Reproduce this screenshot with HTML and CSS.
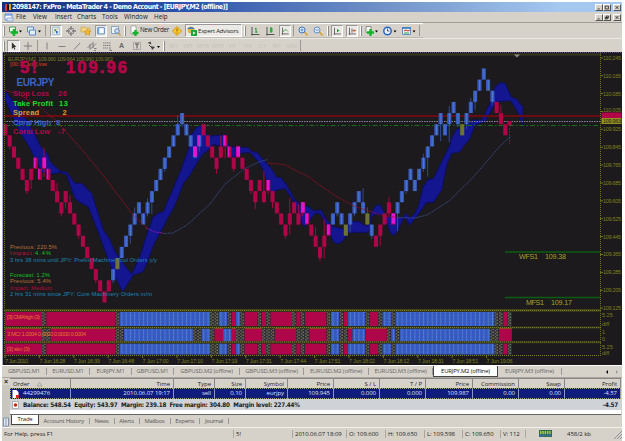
FILE: index.html
```html
<!DOCTYPE html>
<html lang="en">
<head>
<meta charset="utf-8">
<title>MetaTrader 4</title>
<link rel="stylesheet" href="styles.css">
</head>
<body>
<div class="app">
  <header class="title">
    <svg class="logo" viewBox="0 0 8 9"><path d="M1 1h2v7H1z" fill="#d33b20"/><path d="M3 2h2v5H3z" fill="#111"/><path d="M5 1h2v6H5z" fill="#e3a21c"/></svg>
    <span class="title-text">2098147: FxPro - MetaTrader 4 - Demo Account - [EURJPY,M2 (offline)]</span>
    <span class="wins"><svg class="win" viewBox="0 0 8 7"><path d="M2 5.5h3" class="k"/></svg><svg class="win" viewBox="0 0 8 7"><path d="M1.5 1.5h4.5v4h-4.5z" class="k"/></svg><svg class="win gap" viewBox="0 0 8 7"><path d="M2 1.5l4 4M6 1.5l-4 4" class="k"/></svg></span>
  </header>
  <nav class="menu">
    <svg class="mi" viewBox="0 0 10 9"><path d="M1 1h7v6H1z" fill="#fff" stroke="#6d93d6"/><path d="M1 2h7" stroke="#4a7ad0"/><path d="M3 5h6v3H3z" fill="#dce8fa" stroke="#6d93d6" stroke-width=".7"/></svg>
    <span>File</span><span>View</span><span>Insert</span><span>Charts</span><span>Tools</span><span>Window</span><span>Help</span>
    <span class="wins"><svg class="win" viewBox="0 0 8 7"><path d="M2 5.5h3" class="k"/></svg><svg class="win" viewBox="0 0 8 7"><path d="M3 1.5h3v2.5h-3zM1.5 3.5h3v2h-3z" class="k"/></svg><svg class="win gap" viewBox="0 0 8 7"><path d="M2 1.5l4 4M6 1.5l-4 4" class="k"/></svg></span>
  </nav>
  <div class="bar bar1">
    <i class="grip"></i>
    <svg viewBox="0 0 15 12"><path d="M1.5 2h6v5h-6z" fill="#f4f8f4" stroke="#3f9a50"/><path d="M6 4v7M3 7.500h7" stroke="#14b428" stroke-width="2.600"/><path d="M11 5.500h3l-1.500 2z"/></svg>
    <svg viewBox="0 0 15 12"><path d="M1.500 2h6v5h-6z" fill="#e4eefc" stroke="#5c88d0"/><path d="M3.500 5h6v5h-6z" fill="#e4eefc" stroke="#5c88d0"/><path d="M12 5.500h3l-1.500 2z"/></svg>
    <i class="sep"></i>
    <svg class="on" viewBox="0 0 12 12"><path d="M2 1.500h8v9H2z" fill="#e9f2ee" stroke="#8fb1cf"/><path d="M4 4h2v2H4z" fill="#1e9a38"/><path d="M6 6h2v3H6z" fill="#2d67c8"/><path d="M4 8l4-5" stroke="#c9a340"/></svg>
    <svg viewBox="0 0 12 12"><circle cx="6" cy="6" r="3" fill="none" stroke="#7d7d80"/><path d="M6 1v4M6 7v4M1 6h4M7 6h4" stroke="#7d7d80" stroke-width="1.300"/></svg>
    <svg viewBox="0 0 12 12"><path d="M1 2h4l1 1h4v4H1z" fill="#f0d284" stroke="#c29a3a" stroke-width=".6"/><path d="M7.500 4l1.200 2 2.300.3-1.700 1.500.5 2.400-2.300-1.200-2.100 1.200.4-2.400L4 6.300 6.400 6z" fill="#f6b82e" stroke="#bf8420" stroke-width=".5"/></svg>
    <svg class="on" viewBox="0 0 12 12"><path d="M2 2h8v7.500H2z" fill="#fff" stroke="#3a74b8"/><path d="M3 2v7" stroke="#7aa9dc" stroke-width="2"/></svg>
    <svg viewBox="0 0 12 12"><path d="M1.500 1.500h7v7h-7z" fill="#eef3fa" stroke="#89a4c4"/><circle cx="7" cy="6" r="2.300" fill="#cfe0f5" stroke="#6288b6"/><path d="M8.500 8l2 2.500" stroke="#d0a030" stroke-width="1.500"/></svg>
    <i class="grip"></i>
    <svg viewBox="0 0 12 12"><path d="M3 1h5v8H3z" fill="#fff" stroke="#999" stroke-width=".8"/><path d="M7.500 5v6M4.500 8h6" stroke="#14b428" stroke-width="2.400"/></svg>
    <span class="lbl">New Order</span>
    <svg viewBox="0 0 12 12"><path d="M6 1.500L10.500 6 6 10.500 1.500 6z" fill="#ffc928" stroke="#bd8a12" stroke-width=".8"/><path d="M6 3.500v3M6 7.500v1" stroke="#8b5b00"/></svg>
    <span class="on expert"><svg viewBox="0 0 12 12"><circle cx="5" cy="5" r="3.500" fill="#e2b843"/><path d="M1 4q4-4 8 0z" fill="#3d78c2"/><path d="M5 5h6v6H5z" fill="#18a838"/><path d="M7 6.500v3l2.500-1.500z" fill="#fff"/></svg>Expert Advisors</span>
    <i class="grip"></i>
    <svg viewBox="0 0 12 12"><path d="M3 2v8.500M2 9.500h8.500" stroke="#555"/><path d="M7 3v5M6 3.500h1M7 7h1.500" stroke="#18972e"/></svg>
    <svg viewBox="0 0 12 12"><path d="M3 2v8.500M2 9.500h8.500" stroke="#555"/><path d="M7 2v6" stroke="#18972e"/><path d="M6 3h2.500v4H6z" fill="#28b040"/></svg>
    <svg class="on" viewBox="0 0 12 12"><path d="M3 2v8.500M2 9.500h8.500" stroke="#555"/><path d="M4 7q2-5 5.500-.5" fill="none" stroke="#3a9b48"/></svg>
    <i class="sep"></i>
    <svg viewBox="0 0 12 12"><path d="M7.500 7l3 3.500" stroke="#d9a32c" stroke-width="1.600"/><circle cx="5" cy="5" r="3" fill="#dceafc" stroke="#3f76c9"/><path d="M3.500 5h3M5 3.500v3" stroke="#3f76c9" stroke-width=".8"/></svg>
    <svg viewBox="0 0 12 12"><path d="M7.500 7l3 3.500" stroke="#d9a32c" stroke-width="1.600"/><circle cx="5" cy="5" r="3" fill="#dceafc" stroke="#5f8fd4"/><path d="M3.500 5h3" stroke="#3f76c9" stroke-width=".8"/></svg>
    <i class="grip"></i>
    <svg class="on" viewBox="0 0 12 12"><path d="M3 2v8.500M2 9.500h8.500" stroke="#555"/><path d="M6 3.500v4l3-2z" fill="#18972e"/></svg>
    <svg class="on" viewBox="0 0 12 12"><path d="M3 2v8.500M2 9.500h8.500M6 3v5" stroke="#555"/><path d="M7 5.500h4M8.500 4v3" stroke="#c8501c"/></svg>
    <i class="grip"></i>
    <svg viewBox="0 0 15 12"><path d="M2 1.500h5v6H2z" fill="#f4f8f4" stroke="#777" stroke-width=".8"/><path d="M6.500 4v7M3 7.500h7" stroke="#14b428" stroke-width="2.400"/><path d="M11 5.500h3l-1.500 2z"/></svg>
    <svg viewBox="0 0 15 12"><circle cx="5.500" cy="6" r="3.700" fill="#eaf3ff" stroke="#2766c4" stroke-width="1.500"/><path d="M5.500 3.500V6h2" fill="none" stroke="#333" stroke-width=".8"/><path d="M11.500 5.500h3l-1.500 2z"/></svg>
    <svg viewBox="0 0 15 12"><path d="M1.500 2.500h8v7h-8z" fill="#eef6fb" stroke="#5b92c8"/><path d="M1 3h9" stroke="#3b7cc4" stroke-width="1.600"/><path d="M3 6l2-1 2 1 2-1" fill="none" stroke="#c23"/><path d="M3 8h5" stroke="#2a9b40"/><path d="M11.500 5.500h3l-1.500 2z"/></svg>
    <i class="sep"></i>
  </div>
  <div class="bar bar2">
    <i class="grip"></i>
    <svg class="on" viewBox="0 0 12 12"><path d="M4 1.500v8l2-1.800 1.300 2.700 1-.5L7.100 7.300h2.300z" fill="#333"/></svg>
    <svg viewBox="0 0 12 12"><path d="M6 2v8M2 6h8" class="g"/></svg>
    <i class="sep"></i>
    <svg viewBox="0 0 12 12"><path d="M6 2.500v7" class="g"/></svg>
    <svg viewBox="0 0 12 12"><path d="M2.500 6.500h7" class="g"/></svg>
    <svg viewBox="0 0 12 12"><path d="M3 9.500l6-6.500" class="g"/></svg>
    <svg viewBox="0 0 12 12"><path d="M1.500 8l6-6M4 9.500l6-6M4 4v5M7 3v5" class="g"/><path d="M8 8.500h2.500M8 10.500h2" class="g"/></svg>
    <svg viewBox="0 0 12 12"><path d="M2 3h8M2 5.500h8M2 8h5" class="g" stroke-dasharray="1.500 .5"/><path d="M9 7v3.500h2" class="g"/></svg>
    <span class="let">A</span>
    <svg viewBox="0 0 12 12"><path d="M2.500 2.500h7v7h-7z" class="g" stroke-dasharray="1 1"/><path d="M4 4h4M6 4v4.500" stroke="#555"/></svg>
    <svg viewBox="0 0 15 12"><path d="M1.500 3l3-1.500 1 3zM5 6l4 1-3 3z" fill="#444"/><path d="M3 5l3 3" stroke="#444"/><path d="M11 6h3l-1.500 2z"/></svg>
    <i class="grip"></i>
    <span class="tf">M1</span><span class="tf">M5</span><span class="tf">M15</span><span class="tf">M30</span><span class="tf">H1</span><span class="tf">H4</span><span class="tf">D1</span><span class="tf">W1</span><span class="tf">MN</span>
    <i class="sep"></i>
  </div>

  <svg class="chart" id="chart" viewBox="2 52 620 313">
    <defs>
      <pattern id="up" width="4.310" height="3" patternUnits="userSpaceOnUse" x="3.300"><rect width="4.310" height="3" fill="#3559c2"/><rect x="1.700" width="1" height="1.300" fill="#3f8ae6"/><rect x="1.700" y="1.500" width="1" height="1" fill="#8080a8"/></pattern>
      <pattern id="flat" width="4.310" height="3" patternUnits="userSpaceOnUse" x="3.300"><rect width="4.310" height="3" fill="#2b2b2e"/><path d="M.8 0v1.500M2.800 1.500V3" stroke="#85858c" stroke-width="1"/><path d="M1.800 1.500V3" stroke="#605a28" stroke-width="1"/></pattern>
    </defs>
    <rect x="2" y="52" width="620" height="313" fill="#1c1a1c"/>
    <path d="M2 52.500h620" stroke="#5d4a93" stroke-dasharray="1 1"/>
    <path d="M4 54.500h597" stroke="#34361e" stroke-width="2"/>
    <path d="M2.500 52v313" stroke="#a4a8c0"/>
    <g fill="#14168f" stroke="#0c0e66" stroke-width="3">
      <path transform="scale(.33333)" d="M15 272L60 330 100 395 122 440 145 465 150 485 180 513 200 517 225 550 245 550 275 580 310 690 330 720 345 755 362 780 395 823 420 770 440 705 460 650 475 640 490 635 520 565 545 505 568 440 570 412 590 382 604 377 618 402 630 408 675 405 688 440 745 443 755 455 770 457 815 507 830 532 843 533 860 555 885 600 905 617 925 620 943 633 963 630 980 660 1000 680 1030 687 1055 665 1080 665 1093 677 1105 677 1115 635 1130 615 1140 615 1155 640 1160 650 1210 653 1218 640 1230 655 1245 640 1255 620 1270 560 1285 538 1300 537 1320 495 1335 465 1348 440 1355 415 1370 388 1395 380 1420 360 1445 360 1470 310 1485 262 1500 248 1515 250 1533 290 1550 298 1568 320 1569 380 1555 340 1533 302 1488 305 1455 365 1425 375 1410 415 1390 440 1380 455 1355 460 1340 495 1325 570 1300 607 1280 607 1260 635 1230 675 1220 660 1212 650 1195 690 1180 707 1170 695 1153 645 1125 643 1115 650 1105 697 1047 697 1027 725 1012 732 1000 725 980 675 960 640 945 640 930 660 915 680 905 670 885 610 855 565 830 570 815 582 805 560 790 510 775 485 750 457 715 460 700 475 680 440 660 438 640 433 620 455 610 460 590 490 570 525 550 550 525 615 500 660 480 700 465 725 430 815 400 825 368 875 340 820 300 710 265 620 240 607 225 595 200 525 180 517 150 523 125 515 110 485 85 435 62 400 15 300z"/>
    </g>
    <path d="M4 116h596" stroke="#6b0c12" stroke-width="1.800"/>
    <path d="M4 121.500h597" stroke="#85859a" stroke-dasharray="1.500 1"/>
    <path d="M5 125.500h595" stroke="#176c17" stroke-dasharray="5 2 1.500 2"/>
    <g id="bars"></g>
    <g fill="none" stroke-width=".9" stroke-dasharray="1.700 .8">
      <path stroke="#a01024" d="M5 90l15 5 20 12 17 14.500 24 27 22 26.500 30 40 14 13"/>
      <path stroke="#a014b0" d="M146 228l9 4 8 1"/>
      <path stroke="#37508e" d="M163 233.500l10-.5 14-8 23-21 15-20 20-15.500 15-7 8-2"/>
      <path stroke="#9a0f22" d="M268 163l16 1.500 24 12 25 18 22 12 27 9 16 2"/>
      <path stroke="#37508e" d="M398 217.500l17 .5 12-3 22-14 23-22.500 29-33.500 10-9"/>
    </g>
    <g class="fs">
      <path d="M505 252h95M505 297.500h95" stroke="#0d5c10" stroke-width="1.500"/>
      <text x="519" y="258.500" textLength="19">WFS1</text><text x="545" y="258.500" textLength="21">109.38</text>
      <text x="526" y="304.500" textLength="18">MFS1</text><text x="551" y="304.500" textLength="21">109.17</text>
    </g>
    <g class="news">
      <text x="8" y="60.500" textLength="105" fill="#77792a">EURJPY,M2  109.960 109.964 109.960 109.963</text>
      <text x="10" y="66" textLength="37" fill="#dd3a1c">[00:31 add] low</text>
      <text x="10" y="248.500" textLength="47" fill="#b9713a">Previous: 220.5%</text>
      <text x="10" y="255" textLength="24" fill="#c61340">Impact:</text>
      <text x="35" y="255" textLength="16" fill="#12c024">4.4%</text>
      <text x="10" y="261.500" textLength="147" fill="#1b86b8">3 hrs 38 mins until JPY: Prelim Machine Tool Orders y/y</text>
      <text x="10" y="276.500" textLength="40" fill="#12c024">Forecast: 1.2%</text>
      <text x="10" y="283" textLength="41" fill="#b9713a">Previous: 5.4%</text>
      <text x="10" y="289.500" textLength="42" fill="#b80b40">Impact: Medium</text>
      <text x="10" y="296" textLength="142" fill="#1b86b8">2 hrs 31 mins since JPY: Core Machinery Orders m/m</text>
    </g>
    <g class="big">
      <text x="20" y="73" class="xl" textLength="17" fill="#b3064a">5!</text>
      <text x="66" y="73" class="xl" textLength="61" fill="#b3064a">109.96</text>
      <text x="16.500" y="86" class="md" textLength="38" fill="#3a63c6">EURJPY</text>
      <text x="13" y="96" textLength="36" fill="#b3064a">Stop Loss</text><text x="58" y="96" textLength="9" fill="#b3064a">26</text>
      <text x="13" y="105.500" textLength="40" fill="#12e024">Take Profit</text><text x="59" y="105.500" textLength="9" fill="#12e024">13</text>
      <text x="13" y="114.500" textLength="26" fill="#e09a34">Spread</text><text x="62.500" y="114.500" fill="#e09a34">2</text>
      <text x="13" y="124.500" textLength="38" fill="#3a63c6">Coral High</text><text x="56" y="124.500" fill="#3a63c6">8</text>
      <text x="13" y="134" textLength="37" fill="#b3064a">Coral Low</text><text x="58" y="134" textLength="7" fill="#b3064a">-7</text>
    </g>
    <path d="M514 54.500h6l-3 3z" fill="#8c8c8c"/>
    <g id="panels"></g>
    <path d="M4.500 55v300M600.500 53v302" stroke="#727618" stroke-width="1" stroke-dasharray="1 1"/>
    <path d="M4 309.500h597" stroke="#4a4318" stroke-width="1"/>
    <g stroke="#3d4018" stroke-width="2"><path d="M4 310.800h597M4 327.500h597M4 342.300h597"/></g>
    <path d="M4 310.500h597M4 327.500h597M4 342h597M4 355.500h597" stroke="#7a7e20" stroke-dasharray="1 1"/>
    <path d="M601.500 112.500h20v5.500h-20z" fill="#b3064a"/>
    <path d="M601.500 118h20v6h-20z" fill="#96901c"/>
    <g class="axis" id="axis"></g>
  </svg>

  <div class="ctabs">
    <span>GBPUSD,M1</span><span>EURUSD,M1</span><span>EURJPY,M1</span><span>GBPUSD,M1</span><span>GBPUSD,M2 (offline)</span><span>GBPUSD,M3 (offline)</span><span>EURUSD,M2 (offline)</span><span>EURUSD,M3 (offline)</span><span class="act">EURJPY,M2 (offline)</span><span>EURJPY,M3 (offline)</span>
    <svg viewBox="0 0 18 6"><path d="M4 1v4L2 3z"/><path d="M12 1v4l2-2z" fill="#999"/></svg>
  </div>

  <section class="term">
    <div class="side"><span class="x">×</span><svg viewBox="0 0 8 10"><path d="M1.500 1h5v8h-5z" fill="#e5ebf7" stroke="#8090a8"/><path d="M3 3h2M3 5h2M3 7h2" stroke="#8090a8"/></svg></div>
    <div class="tbody">
      <div class="row head"><span class="l">Order<svg class="sort" viewBox="0 0 9 10"><path d="M2 7h5L4.500 3.500z" fill="none" stroke="#999" stroke-width=".8"/></svg></span><span>Time</span><span>Type</span><span>Size</span><span>Symbol</span><span>Price</span><span>S / L</span><span>T / P</span><span>Price</span><span>Commission</span><span>Swap</span><span>Profit</span></div>
      <div class="row sel"><span class="l"><svg viewBox="0 0 9 10"><path d="M1.500 1h4l2 2v6h-6z" fill="#fff"/><path d="M5 6h3v3H5z" fill="#d22"/></svg>44299476</span><span>2010.06.07 19:17</span><span>sell</span><span>0.10</span><span>eurjpy</span><span>109.945</span><span>0.000</span><span>0.000</span><span>109.987</span><span>0.00</span><span>0.00</span><span>-4.57</span></div>
      <div class="bal"><svg viewBox="0 0 9 10"><path d="M1.500 1.500h6v7h-6z" fill="#fff" stroke="#999" stroke-width=".7"/><circle cx="4.500" cy="5" r="1.700" fill="#cc2010"/></svg><b>Balance: 548.54&nbsp; Equity: 543.97&nbsp; Margin: 239.18&nbsp; Free margin: 304.80&nbsp; Margin level: 227.44%</b><b class="pl">-4.57</b></div>
      <div class="blank"></div>
      <div class="ttabs"><span class="act">Trade</span><span>Account History</span><span>News</span><span>Alerts</span><span>Mailbox</span><span>Experts</span><span>Journal</span></div>
    </div>
  </section>

  <footer class="status">
    <span>For Help, press F1</span><span>5!</span><span>2010.06.07 18:09</span><span>O: 109.600</span><span>H: 109.650</span><span>L: 109.598</span><span>C: 109.650</span><span>V: 112</span>
    <span class="net"><svg viewBox="0 0 13 7"><path d="M0 0h13v7H0z" fill="#2c6b50"/><path d="M1 2.500h11" stroke="#a7c83c" stroke-width="3" stroke-dasharray="1.500 .8"/><path d="M1 5.500h11" stroke="#3f6fc0" stroke-width="2" stroke-dasharray="1.500 .8"/></svg>458/2 kb</span>
    <svg class="size" viewBox="0 0 8 8"><path d="M0 8l8-8M3 8l5-5M6 8l2-2" stroke="#8b8f98"/></svg>
  </footer>
</div>
<script src="chart.js"></script>
</body>
</html>
```

FILE: styles.css
```css
* { box-sizing: border-box; }
body {
  margin: 0;
  background: #fff;
  overflow: hidden;
}
.app {
  display: flex;
  flex-direction: column;
  width: 620px;
  height: 439px;
  margin: 2px 0 0 2px;
  background: #d6d2ca;
  color: #222;
  font: 6px/1 "Open Sans", "Noto Sans", sans-serif;
  white-space: pre;
}
.app > * { white-space: normal; }
.app span, .app b { white-space: pre; }
svg { display: block; }
.title {
  display: flex;
  align-items: center;
  height: 10px;
  padding-left: 2px;
  background: linear-gradient(90deg, #14307e, #2c53ae 30%, #4468b4 40%, #7799cc 65%, #a4c8f0 90%);
  color: #fff;
}
.logo { width: 8px; height: 9px; }
.title-text { font: bold 7px/10px "DejaVu Sans Condensed", sans-serif; letter-spacing: -0.5px; }
.wins { display: flex; margin-left: auto; padding-right: 1px; }
.win {
  width: 8px;
  height: 7px;
  background: #d6d2ca;
  border: solid;
  border-width: 1px;
  border-color: #fff #555 #555 #fff;
}
.gap { margin-left: 2px; }
.k { fill: none; stroke: #111; }
.menu {
  display: grid;
  grid-template-columns: 14px 17px 22px 22px 25px 22px 30px 20px 1fr;
  align-items: center;
  height: 11px;
  border-bottom: 1px solid #a29e96;
  font-size: 6.300px;
}
.mi { width: 10px; height: 9px; margin-left: 2px; }
.menu .wins { justify-self: end; }

.bar { display: grid; align-items: center; justify-items: center; }
.bar svg { width: 12px; height: 12px; }
.bar svg[viewBox^="0 0 15"] { width: 15px; }
.bar1 {
  height: 15px;
  width: 421px;
  border-top: 1px solid #fff;
  border-bottom: 1px solid #bcb8b0;
  grid-template-columns: 4px 18px 18px 6px 15px 15px 15px 15px 15px 4px 13px 29px 15px 59px 4px 15px 15px 15px 3px 15px 16px 3px 15px 15px 3px 18px 19px 18px 4px;
}
.bar2 {
  height: 14px;
  border-top: 1px solid #eceae4;
  grid-template-columns: 4px 14px 16px 3px 15px 15px 15px 15px 15px 15px 15px 18px 4px repeat(9, 14.800px) 3px 1fr;
}
.grip { width: 2px; height: 10px; border-left: 1px solid #fff; border-right: 1px solid #8c8a86; }
.sep { width: 1px; height: 11px; background: #9c9890; }
.on { background: #eceae6; border: 1px solid; border-color: #999 #fff #fff #999; }
.bar2 .on { width: 13px; }
.lbl { justify-self: start; font-size: 6.200px; letter-spacing: -0.300px; }
.expert {
  display: flex;
  align-items: center;
  width: 57px;
  height: 13px;
  font-size: 6px;
  letter-spacing: -0.200px;
}
.g { fill: none; stroke: #777; stroke-width: .9; }
.let { font: bold 7px/1 "Liberation Sans", sans-serif; color: #666; }
.tf { color: #c5c0b7; }
.chart { width: 620px; height: 313px; flex: none; }
.chart text { white-space: pre; }
.fs { font: 7.200px "Liberation Sans", sans-serif; fill: #a9a12e; }
.news { font: 5.800px "Liberation Sans", sans-serif; }
.big { font: bold 7.500px "Liberation Sans", sans-serif; }
.xl { font-size: 16.500px; stroke: #b3064a; stroke-width: .7; }
.md { font-size: 10px; }
.axis { font: 5.500px "Liberation Sans", sans-serif; fill: #7c801c; }

.ctabs {
  display: grid;
  grid-template-columns: 45px 43px 42px 42px 66px 64px 65px 64px 65px 64px 1fr;
  height: 12px;
  align-items: center;
  border-top: 1px solid #fff;
  color: #666;
  font-size: 5.900px;
  letter-spacing: -0.180px;
}
.ctabs span { text-align: center; border-right: 1px solid #999; line-height: 7px; }
.ctabs .act { align-self: start; background: #fff; border: 1px solid #444; border-top: 0; color: #111; line-height: 10px; }
.ctabs svg { width: 18px; height: 6px; justify-self: end; }

.term { display: flex; height: 50px; border-top: 1px solid #aaa69e; }
.side { width: 8px; display: flex; flex-direction: column; justify-content: space-between; background: #c9c6c0; }
.side svg { width: 8px; height: 10px; }
.x { font: bold 7px/7px "Liberation Sans", sans-serif; text-align: center; background: #d6d2ca; }
.tbody { flex: 1; display: flex; flex-direction: column; padding-right: 1px; }
.row {
  display: grid;
  grid-template-columns: 61px 103px 41px 31px 42px 46px 46px 46px 47px 46px 46px 1fr;
  letter-spacing: -0.050px;
}
.row span { text-align: right; padding-right: 3px; border-right: 1px solid #888; }
.row .l { display: flex; align-items: center; text-align: left; padding-left: 3px; }
.head { height: 10px; line-height: 10px; font-size: 6px; border-top: 1px solid #888; }
.row .sort { margin-left: 6px; }
.sel { height: 11px; line-height: 11px; background: #101c7c; color: #dfe4f6; outline: 1px dotted #a9a26a; outline-offset: -1px; }
.sel span { border-color: #8c94c8; }
.row .l svg, .bal svg { width: 9px; height: 10px; flex: none; }
.sel .l svg { margin-right: 3px; }
.bal svg { margin-right: 3px; }
.sel .l { padding-left: 1px; }
.bal { display: flex; align-items: center; height: 11px; padding: 0 3px 0 1px; background: #cfd3d8; font: bold 6.300px/11px "DejaVu Sans Condensed", sans-serif; letter-spacing: -0.230px; }
.pl { margin-left: auto; }
.blank { height: 4px; background: #fff; }
.ttabs { display: flex; flex: 1; align-items: center; border-top: 1px solid #666; color: #555; font-size: 5.900px; letter-spacing: -0.200px; }
.ttabs span { padding: 0 5px 0 4.500px; border-right: 1px solid #999; line-height: 6px; }
.ttabs .act { align-self: start; width: 28px; margin-left: 1px; text-align: center; line-height: 9px; background: #fff; color: #111; border: 1px solid #444; border-top: 0; padding: 0; }

.status {
  display: grid;
  grid-template-columns: 232px 59px 54px 39px 39px 38px 38px 25px 1fr 8px;
  align-items: center;
  flex: 1;
  padding-bottom: 2px;
  border-top: 1px solid #f3f1ec;
  letter-spacing: -0.050px;
}
.status > span { padding-left: 2px; border-right: 1px solid #aaa69e; line-height: 8px; }
.status .net { display: flex; align-items: center; border: 0; padding-left: 13px; }
.net svg { width: 13px; height: 7px; margin-right: 15px; }
.size { width: 8px; height: 8px; align-self: end; }
```

FILE: chart.js
```js
const NS = "http://www.w3.org/2000/svg";
const STEP = 4.31, LEFT = 3.3, BRICK = 11.15, BASE = 124.2;
const xAt = i => LEFT + STEP * i;

function add(parent, tag, attrs, text) {
  const el = document.createElementNS(NS, tag);
  for (const k in attrs) el.setAttribute(k, attrs[k]);
  if (text) el.textContent = text;
  parent.appendChild(el);
}

// Brick level of each bar, counted down from the bid line.
const levels = [
  0,1,2,3,4,5,4,3,4,3,4,5,6,7,6,7,8,9,10,11,12,13,14,15,14,
  13,12,11,10,9,8,7,8,7,6,5,4,3,2,1,0,-1,0,1,2,1,0,
  1,2,3,2,1,2,3,2,3,4,5,6,5,6,5,6,7,8,9,8,7,8,7,8,9,10,11,10,9,
  8,7,8,9,8,7,6,7,8,9,10,9,8,7,8,
  7,6,5,4,5,4,3,2,1,0,-1,0,-1,-2,-1,0,-1,-2,-3,-4,-5,-4,-3,-2,-1,0
];
const isUp = i => (i >= 25 && i <= 45) || (i >= 76 && i <= 85) || (i >= 91 && i <= 113);
// Share of the brick width that lies inside the cloud.
const inCloud = { 7: .5, 8: .4, 9: 1, 10: .4, 44: 1, 45: .6, 51: .6, 52: .4, 54: 1, 61: .8, 69: 1, 70: .8, 75: .8, 90: 1 };
const olive = new Set([26, 79, 84, 106]);
const upTails = { 9: 10, 12: 8, 15: 7, 30: 6, 33: 4, 40: 9, 50: 11, 60: 20, 66: 15, 68: 9, 72: 8, 74: 16, 83: 14, 84: 6, 89: 5, 97: 4, 103: 7, 108: 4, 115: 8 };
const downTails = { 6: 9, 9: 8, 14: 6, 29: 8, 34: 12, 45: 5, 49: 5, 51: 12, 58: 7, 62: 6, 66: 10, 74: 12, 80: 8, 87: 10, 91: 18, 98: 19, 101: 17, 103: 18, 107: 5, 109: 8 };

const bars = document.getElementById("bars");
levels.forEach((n, i) => {
  const y = BASE + BRICK * n, x = xAt(i), up = isUp(i);
  const tone = up ? "#2f4a96" : "#a00a40";
  const t = upTails[i] || 0, b = downTails[i] || (i % 4 === 1 ? 3 : 0);
  if (t || b) add(bars, "path", { d: `M${x + 2} ${y - t}v${BRICK + t + b}`, stroke: tone, "stroke-width": 1 });
  const fill = olive.has(i) ? "#6d7436" : up ? "url(#up)" : "#ae0648";
  add(bars, "rect", { x, y, width: 4.1, height: BRICK, fill });
  if (inCloud[i]) add(bars, "rect", { x: x + .4, y, width: 3.6 * inCloud[i], height: BRICK - 1, fill: "#e414d4" });
});
add(bars, "rect", { x: xAt(117), y: 121, width: 4, height: 4, fill: "#ae0648" });
add(bars, "path", { d: `M${xAt(117) + 2} 125v19`, stroke: "#a00a40", "stroke-dasharray": "2 1" });

// Signal strips: colour and number of bars for each run.
const trend = "r9 g1 r16 g1 b21 g2 b2 g1 r1 b1 g1 r3 g1 r1 g1 r5 g1 r1 g1 r5 g1 b2 g1 r1 b4 g1 r2 g1 b2 g1 b23 g2 r1 g1";
const momentum = "r9 g2 r15 g2 b16 g2 b2 g1 r2 b2 r1 g2 r4 g3 r5 g3 r4 g1 b2 g2 r1 b3 r5 g1 b1 g1 b21 g2 r3";
const fills = { r: "#ae0648", g: "url(#flat)", b: "url(#up)" };
const panels = document.getElementById("panels");
[[trend, 312, 14], [momentum, 328.5, 13], [trend, 343.5, 11]].forEach(([runs, y, height], p) => {
  let i = 0;
  runs.split(" ").forEach(run => {
    const n = +run.slice(1), x = Math.max(5, xAt(i)), width = xAt(i + n) - x;
    add(panels, "rect", { x, y, width, height, fill: fills[run[0]] });
    if (p === 1 && run[0] === "r") add(panels, "path", { d: `M${x} 328.500h${width}`, stroke: "#d8521c" });
    i += n;
  });
});
[[7, 319, 33, "[3] CMAhigh (3)"], [7, 335.5, 79, "3 MCI 1.0004 0.0000 0.0000 0.0004"], [7, 350.5, 23, "[3] skn (3)"]].forEach(([x, y, w, s]) =>
  add(panels, "text", { x, y, textLength: w, fill: "#e8752c", "font-size": 5.8, "font-family": "Liberation Sans" }, s));

const axis = document.getElementById("axis");
for (let k = 0; k < 15; k++) {
  const y = 59.8 + 17.88 * k;
  if (k !== 3) add(axis, "text", { x: 603, y, textLength: 18 }, (110.245 - .08 * k).toFixed(3));
  else add(axis, "text", { x: 603, y: 112.3, textLength: 18 }, "110.005");
  add(axis, "path", { d: `M600 ${y - 2}h3`, stroke: "#727618" });
}
add(axis, "text", { x: 603, y: 123, textLength: 18, style: "fill:#222" }, "109.963");
[["5.25", 316.5], ["diff", 326], ["1", 334], ["0", 340.5], ["5.25", 348.5], ["diff", 355]].forEach(([s, y]) => add(axis, "text", { x: 602, y }, s));
["2010", "16:28", "16:39", "16:48", "17:00", "17:10", "17:19", "17:31", "17:44", "17:51", "18:02", "18:12", "18:31", "18:51", "19:06"]
  .forEach((t, k) => {
    const x = 5 + 34.4 * k;
    add(axis, "path", { d: `M${x} 355v3`, stroke: "#727618" });
    add(axis, "text", { x, y: 362.5, textLength: k ? 26 : 23 }, (k ? "7 Jun " : "7 Jun ") + t);
  });
```
